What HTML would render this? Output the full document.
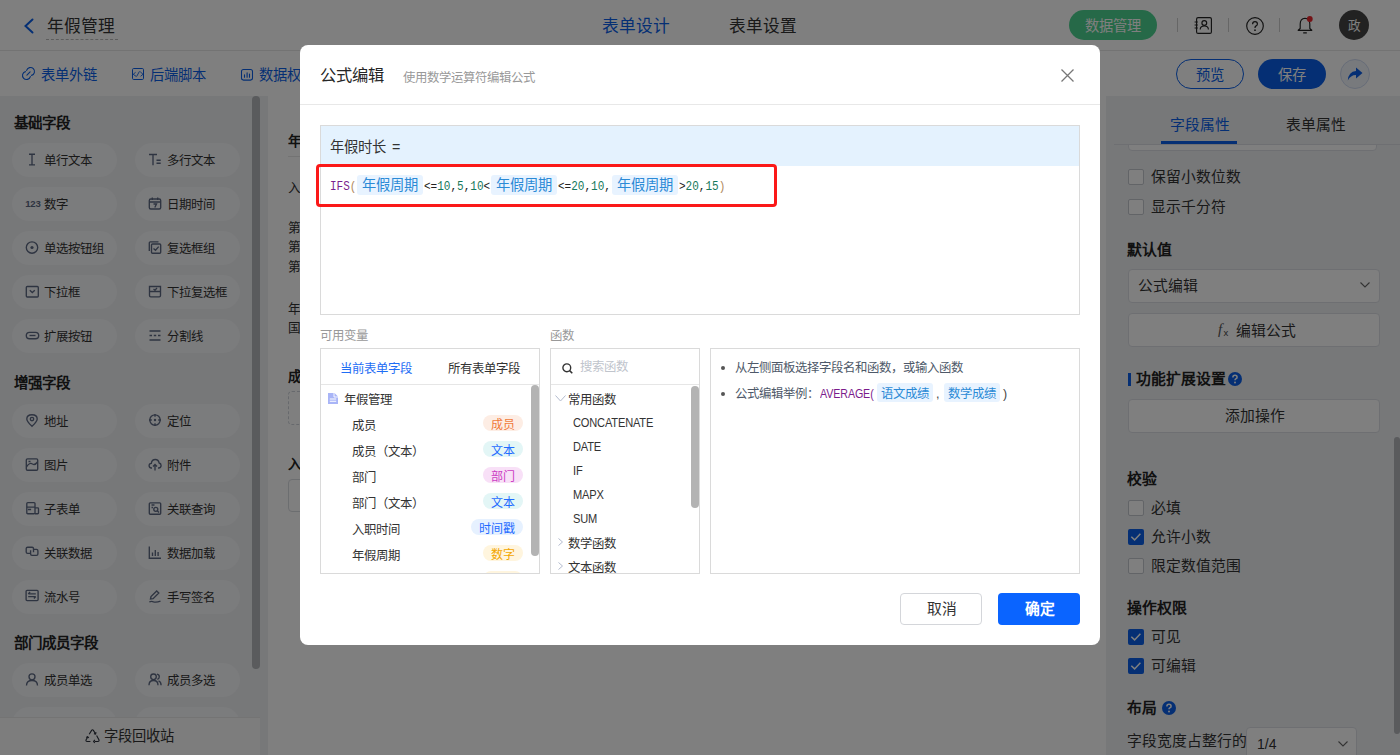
<!DOCTYPE html>
<html lang="zh-CN"><head><meta charset="utf-8"><title>年假管理</title>
<style>
*{box-sizing:border-box;margin:0;padding:0}
html,body{width:1400px;height:755px;overflow:hidden;background:#fff}
body{font-family:"Liberation Sans",sans-serif;color:#333;position:relative}
.a{position:absolute;white-space:nowrap}
svg{display:block;overflow:visible}
/* header */
#hdr{position:absolute;left:0;top:0;width:1400px;height:51px;background:#fff;border-bottom:1px solid #e6e6e6}
#tb{position:absolute;left:0;top:50px;width:1400px;height:46px;background:transparent}
#lp{position:absolute;left:0;top:96px;width:268px;height:659px;background:#eef0f3}
#cv{position:absolute;left:268px;top:96px;width:838px;height:659px;background:#fff}
#rp{position:absolute;left:1106px;top:96px;width:294px;height:659px;background:#eef0f3}
.t16{font-size:16.7px;line-height:20px}
.t14{font-size:14.8px;line-height:20px}
.t12{font-size:12.5px;line-height:16px}
.blue{color:#0a5fe8}
.card{position:absolute;width:105px;height:34px;border-radius:17px;background:#f7f8fa}
.card .ic{position:absolute;left:13px;top:9.5px;width:14px;height:13px}
.card .tx{position:absolute;left:32px;top:9.5px;font-size:12.4px;line-height:16px;color:#333;white-space:nowrap}
.sec{position:absolute;left:14px;font-size:14.5px;line-height:20px;font-weight:bold;color:#222}
#mask{position:absolute;left:0;top:0;width:1400px;height:755px;background:rgba(0,0,0,.5)}
#modal{position:absolute;left:300px;top:45px;width:800px;height:600px;background:#fff;border-radius:8px}
.m16{font-size:16.3px;line-height:20px}
.m14{font-size:14.8px;line-height:20px}
.m12{font-size:12.4px;line-height:16px}
.lat{font-size:12.6px;line-height:16px;letter-spacing:-0.2px;color:#333;transform:scaleX(0.88);transform-origin:0 0}
.fx{font-family:"Liberation Mono",monospace;font-size:12.6px;line-height:20px;color:#333;display:flex;align-items:center}
.fx .g{display:inline-block;height:20px;position:relative;top:1.5px}
.fx .g b{font-weight:normal;display:inline-block;transform:scaleX(0.875);transform-origin:0 50%;white-space:nowrap}
.fx .fn{color:#7a1f8f}.fx .pr{color:#b08a60}.fx .nm{color:#16795c}.fx .op{color:#222}
.fx .vt{font-family:"Liberation Sans",sans-serif;letter-spacing:0;font-size:14.3px;line-height:20px;background:#e8f3ff;color:#2b8ad6;padding:0 5px;margin:0 1px;border-radius:3px}
.ht{background:#e8f3ff;color:#2b8ad6;padding:3px 4px 2px;border-radius:3px;margin-left:4px;display:inline-block;line-height:14px}
.lat2{font-size:12.4px;letter-spacing:-0.1px;transform:scaleX(0.86);transform-origin:0 0}
</style></head><body>

<!-- ============ BACKGROUND PAGE ============ -->
<div id="hdr">
  <svg class="a" style="left:23px;top:18px" width="11" height="16" viewBox="0 0 11 16"><path d="M9.5 1.5 L2.5 8 L9.5 14.5" fill="none" stroke="#0a5fe8" stroke-width="2" stroke-linecap="round"/></svg>
  <div class="a t16" style="left:47px;top:17px;color:#333">年假管理</div>
  <div class="a" style="left:46px;top:39px;width:72px;border-top:1px dashed #bbb"></div>
  <div class="a t16 blue" style="left:602px;top:17px">表单设计</div>
  <div class="a t16" style="left:729px;top:17px;color:#333">表单设置</div>
  <div class="a" style="left:1069px;top:10px;width:88px;height:30px;border-radius:15px;background:#4cd290"></div>
  <div class="a" style="left:1084.5px;top:15.5px;font-size:14.3px;line-height:20px;color:#fff">数据管理</div>
  <div class="a" style="left:1177px;top:18px;width:1px;height:14px;background:#ccc"></div>
  <div class="a" style="left:1228px;top:18px;width:1px;height:14px;background:#ccc"></div>
  <div class="a" style="left:1279px;top:18px;width:1px;height:14px;background:#ccc"></div>
  <!-- contacts icon -->
  <svg class="a" style="left:1194px;top:17px" width="18" height="17" viewBox="0 0 18 17"><rect x="2.6" y="0.6" width="14.8" height="15.8" rx="1.5" fill="none" stroke="#222" stroke-width="1.15"/><circle cx="10.3" cy="6" r="2.4" fill="none" stroke="#222" stroke-width="1.15"/><path d="M6.2 12.5 Q6.2 9 10.3 9 Q14.4 9 14.4 12.5" fill="none" stroke="#222" stroke-width="1.15"/><path d="M0.6 5h3.2M0.6 8h3.2M0.6 11h3.2" stroke="#222" stroke-width="1.1"/></svg>
  <!-- help icon -->
  <svg class="a" style="left:1246px;top:17px" width="18" height="18" viewBox="0 0 18 18"><circle cx="9" cy="9" r="8.3" fill="none" stroke="#222" stroke-width="1.15"/><path d="M6.6 7.2 Q6.6 4.6 9 4.6 Q11.4 4.6 11.4 6.9 Q11.4 8.3 9.8 9.1 Q9 9.5 9 10.9" fill="none" stroke="#222" stroke-width="1.2"/><circle cx="9" cy="13.2" r="0.85" fill="#222"/></svg>
  <!-- bell -->
  <svg class="a" style="left:1297px;top:16px" width="16" height="18" viewBox="0 0 16 18"><path d="M8 2.2 Q3.2 2.4 3.2 8 V12.5 L1.2 14.3 H14.8 L12.8 12.5 V8 Q12.8 2.4 8 2.2 Z M6.2 16.8 H9.8" fill="none" stroke="#222" stroke-width="1.15" stroke-linejoin="round"/><circle cx="12.8" cy="3" r="2.9" fill="#e8262d"/></svg>
  <div class="a" style="left:1339px;top:10px;width:30px;height:30px;border-radius:50%;background:#444"></div>
  <div class="a" style="left:1347.5px;top:17.5px;font-size:12.6px;line-height:16px;color:#fff">政</div>
</div>

<div id="tb">
  <svg class="a" style="left:22.3px;top:17.3px" width="13" height="13" viewBox="0 0 13 13"><path d="M4.64 3.46A4 4 0 1 1 9.54 8.36M8.36 9.54A4 4 0 1 1 3.46 4.64M4.9 8.1L8.1 4.9" fill="none" stroke="#0a5fe8" stroke-width="1.1" stroke-linecap="round"/></svg>
  <div class="a blue" style="left:41px;top:14.5px;font-size:14.3px;line-height:20px">表单外链</div>
  <svg class="a" style="left:132px;top:18px" width="12" height="12" viewBox="0 0 12 12"><rect x="0.5" y="0.5" width="11" height="11" rx="1.2" fill="none" stroke="#0a5fe8" stroke-width="1"/><path d="M3.6 4.3L1.2 6.3L4.3 8.5M7.5 3.3L4.6 8.5M8.2 3.7L11 6.3L8.6 8.3" fill="none" stroke="#0a5fe8" stroke-width="0.9"/></svg>
  <div class="a blue" style="left:150px;top:14.5px;font-size:14.3px;line-height:20px">后端脚本</div>
  <svg class="a" style="left:241px;top:18.5px" width="12" height="12" viewBox="0 0 12 12"><rect x="0.5" y="0.5" width="11" height="10.6" rx="2" fill="none" stroke="#0a5fe8" stroke-width="1.05"/><path d="M3.5 5.9V8.3M6.1 3.9V8.3M8.5 5.1V8.3" stroke="#0a5fe8" stroke-width="1.1" stroke-linecap="round"/></svg>
  <div class="a blue" style="left:259px;top:14.5px;font-size:14.3px;line-height:20px">数据权限</div>
  <div class="a" style="left:1176px;top:9px;width:68px;height:30px;border-radius:15px;border:1px solid #0a5fe8"></div>
  <div class="a blue" style="left:1195.5px;top:14.5px;font-size:14.3px;line-height:20px">预览</div>
  <div class="a" style="left:1258px;top:9px;width:68px;height:30px;border-radius:15px;background:#0a5fe8"></div>
  <div class="a" style="left:1277.5px;top:14.5px;font-size:14.3px;line-height:20px;color:#fff">保存</div>
  <div class="a" style="left:1340px;top:9px;width:30px;height:30px;border-radius:50%;border:1px solid #cfdaf0;background:#f0f4fb"></div>
  <svg class="a" style="left:1347px;top:17px" width="16" height="15" viewBox="0 0 16 15"><path d="M9 0.5 L15.5 6 L9 11.5 V8 Q3.5 8 0.8 13.5 Q1.5 4.5 9 4 Z" fill="#0a5fe8"/></svg>
</div>

<div id="lp"></div>
<div class="a" style="left:0;top:0">
<div class="sec" style="top:113px">基础字段</div>
<div class="card" style="left:12px;top:143px"><svg class="ic" width="13" height="13" viewBox="0 0 13 13"><path d="M3.5 1.2H9.5M3.5 11.8H9.5M6.5 1.2V11.8" stroke="#5d6983" stroke-width="1.35" fill="none"/></svg><div class="tx">单行文本</div></div>
<div class="card" style="left:135px;top:143px"><svg class="ic" width="13" height="13" viewBox="0 0 13 13"><path d="M0.5 1.5H8.5M4.5 1.5V12.2M8 7.2H12.2M8 10.2H12.2" stroke="#5d6983" stroke-width="1.35" fill="none"/></svg><div class="tx">多行文本</div></div>
<div class="card" style="left:12px;top:187px"><svg class="ic" width="13" height="13" viewBox="0 0 13 13"><text x="-0.3" y="10.2" font-family="Liberation Sans" font-weight="bold" font-size="9.6" fill="#5d6983" letter-spacing="-0.2">123</text></svg><div class="tx">数字</div></div>
<div class="card" style="left:135px;top:187px"><svg class="ic" width="13" height="13" viewBox="0 0 13 13"><rect x="0.8" y="2" width="11.4" height="10" rx="1.5" stroke="#5d6983" stroke-width="1.35" fill="none"/><path d="M0.8 5H12.2M3.8 0.5V3M9.2 0.5V3M5 7H8L6.3 10.5" stroke="#5d6983" stroke-width="1.35" fill="none"/></svg><div class="tx">日期时间</div></div>
<div class="card" style="left:12px;top:231px"><svg class="ic" width="13" height="13" viewBox="0 0 13 13"><circle cx="6.5" cy="6.5" r="5.7" stroke="#5d6983" stroke-width="1.35" fill="none"/><circle cx="6.5" cy="6.5" r="1.6" fill="#5d6983"/></svg><div class="tx">单选按钮组</div></div>
<div class="card" style="left:135px;top:231px"><svg class="ic" width="13" height="13" viewBox="0 0 13 13"><path d="M0.8 10V1.8Q0.8 0.8 1.8 0.8H10" stroke="#5d6983" stroke-width="1.35" fill="none"/><rect x="3" y="3" width="9.2" height="9.2" rx="1" stroke="#5d6983" stroke-width="1.35" fill="none"/><path d="M5 7.4L7 9.2L10.2 5.6" stroke="#5d6983" stroke-width="1.35" fill="none"/></svg><div class="tx">复选框组</div></div>
<div class="card" style="left:12px;top:275px"><svg class="ic" width="13" height="13" viewBox="0 0 13 13"><rect x="0.8" y="1.5" width="12" height="10.5" rx="1" stroke="#5d6983" stroke-width="1.35" fill="none"/><path d="M4.3 5.3L6.8 7.6L9.3 5.3" stroke="#5d6983" stroke-width="1.35" fill="none"/></svg><div class="tx">下拉框</div></div>
<div class="card" style="left:135px;top:275px"><svg class="ic" width="13" height="13" viewBox="0 0 13 13"><path d="M1 1.5H12V6.5H1Z M1 6.5V10.5Q1 11.8 2.3 11.8H10.7Q12 11.8 12 10.5V6.5 M5 4L6.5 5.2L8.5 3" stroke="#5d6983" stroke-width="1.35" fill="none"/></svg><div class="tx">下拉复选框</div></div>
<div class="card" style="left:12px;top:319px"><svg class="ic" width="13" height="13" viewBox="0 0 13 13"><rect x="0.8" y="3.3" width="12.4" height="6.4" rx="3.2" stroke="#5d6983" stroke-width="1.35" fill="none"/><path d="M4 6.5H10" stroke="#5d6983" stroke-width="1.35" fill="none"/></svg><div class="tx">扩展按钮</div></div>
<div class="card" style="left:135px;top:319px"><svg class="ic" width="13" height="13" viewBox="0 0 13 13"><path d="M1 2H12M1 6.5H3.5M5.3 6.5H7.7M9.5 6.5H12M1 11H12" stroke="#5d6983" stroke-width="1.35" fill="none"/></svg><div class="tx">分割线</div></div>
<div class="sec" style="top:373px">增强字段</div>
<div class="card" style="left:12px;top:404px"><svg class="ic" width="13" height="13" viewBox="0 0 13 13"><path d="M6.5 12.3Q1.3 7.5 1.3 5Q1.3 0.7 6.5 0.7Q11.7 0.7 11.7 5Q11.7 7.5 6.5 12.3Z" stroke="#5d6983" stroke-width="1.35" fill="none"/><circle cx="6.5" cy="5" r="1.7" stroke="#5d6983" stroke-width="1.35" fill="none"/></svg><div class="tx">地址</div></div>
<div class="card" style="left:135px;top:404px"><svg class="ic" width="13" height="13" viewBox="0 0 13 13"><circle cx="6.5" cy="6" r="5.2" stroke="#5d6983" stroke-width="1.35" fill="none"/><circle cx="6.5" cy="6" r="1.2" fill="#5d6983"/><path d="M6.5 0V2.8M6.5 9.2V12M0.5 6H3.3M9.7 6H12.5" stroke="#5d6983" stroke-width="1.35" fill="none"/></svg><div class="tx">定位</div></div>
<div class="card" style="left:12px;top:448px"><svg class="ic" width="13" height="13" viewBox="0 0 13 13"><rect x="0.8" y="0.8" width="11.4" height="11.4" rx="1.2" stroke="#5d6983" stroke-width="1.35" fill="none"/><path d="M1 9Q4 4 7 6Q9.5 7.5 12 4M3 3.5H5" stroke="#5d6983" stroke-width="1.35" fill="none"/></svg><div class="tx">图片</div></div>
<div class="card" style="left:135px;top:448px"><svg class="ic" width="13" height="13" viewBox="0 0 13 13"><path d="M3.5 10H2.8Q0.6 10 0.6 7.6Q0.6 5.5 2.8 5.3Q3.4 1.5 6.8 1.5Q10 1.5 10.6 5Q12.6 5.4 12.6 7.6Q12.6 10 10.2 10H9.5M6.5 12.5V6.5M4.5 8.5L6.5 6.5L8.5 8.5" stroke="#5d6983" stroke-width="1.35" fill="none"/></svg><div class="tx">附件</div></div>
<div class="card" style="left:12px;top:492px"><svg class="ic" width="13" height="13" viewBox="0 0 13 13"><rect x="1.3" y="0.6" width="8.2" height="11.1" rx="1" stroke="#5d6983" stroke-width="1.35" fill="none"/><path d="M1.3 5.1H9.5M2.4 7.5H5.6M9.5 5.9H12.2Q13 5.9 13 6.7V10.9Q13 11.7 12.2 11.7H9.5" stroke="#5d6983" stroke-width="1.35" fill="none"/></svg><div class="tx">子表单</div></div>
<div class="card" style="left:135px;top:492px"><svg class="ic" width="13" height="13" viewBox="0 0 13 13"><rect x="0.8" y="0.8" width="11.4" height="11.4" rx="1" stroke="#5d6983" stroke-width="1.35" fill="none"/><path d="M3 3H6M3 5.5H4.5" stroke="#5d6983" stroke-width="1.35" fill="none"/><circle cx="7.3" cy="7.3" r="2" stroke="#5d6983" stroke-width="1.35" fill="none"/><path d="M8.8 8.8L10.5 10.5" stroke="#5d6983" stroke-width="1.35" fill="none"/></svg><div class="tx">关联查询</div></div>
<div class="card" style="left:12px;top:536px"><svg class="ic" width="13" height="13" viewBox="0 0 13 13"><path d="M4.6 7.4H2.1Q0.7 7.4 0.7 6V2.6Q0.7 1.2 2.1 1.2H6.6Q8 1.2 8 2.6V6.3M8.4 3.3H11Q12.4 3.3 12.4 4.7V7.9Q12.4 9.3 11 9.3H6.5Q5.1 9.3 5.1 7.9V4.3" stroke="#5d6983" stroke-width="1.35" fill="none"/></svg><div class="tx">关联数据</div></div>
<div class="card" style="left:135px;top:536px"><svg class="ic" width="13" height="13" viewBox="0 0 13 13"><path d="M0.8 0.5V12.2H12.5M4 6.5V10M6.8 4V10M9.6 6V10" stroke="#5d6983" stroke-width="1.35" fill="none"/></svg><div class="tx">数据加载</div></div>
<div class="card" style="left:12px;top:580px"><svg class="ic" width="13" height="13" viewBox="0 0 13 13"><rect x="0.6" y="0.3" width="12" height="10.3" rx="1" stroke="#5d6983" stroke-width="1.35" fill="none"/><path d="M2.7 3.9H10.3M2.7 3.9L4.6 2.1M2.7 6.6H10.3M10.3 6.6L8.4 8.4" stroke="#5d6983" stroke-width="1.35" fill="none"/></svg><div class="tx">流水号</div></div>
<div class="card" style="left:135px;top:580px"><svg class="ic" width="13" height="13" viewBox="0 0 13 13"><path d="M2 9L2.5 6.6L8.2 0.9L10.3 3L4.6 8.7Z M0.8 12Q3 10.8 5 11.8Q7.5 12.8 12 11.2" stroke="#5d6983" stroke-width="1.35" fill="none"/></svg><div class="tx">手写签名</div></div>
<div class="sec" style="top:633px">部门成员字段</div>
<div class="card" style="left:12px;top:663px"><svg class="ic" width="13" height="13" viewBox="0 0 13 13"><circle cx="6.5" cy="3.8" r="3" stroke="#5d6983" stroke-width="1.35" fill="none"/><path d="M1 12.5Q1 7.5 6.5 7.5Q12 7.5 12 12.5" stroke="#5d6983" stroke-width="1.35" fill="none"/></svg><div class="tx">成员单选</div></div>
<div class="card" style="left:135px;top:663px"><svg class="ic" width="13" height="13" viewBox="0 0 13 13"><circle cx="5" cy="3.8" r="2.8" stroke="#5d6983" stroke-width="1.35" fill="none"/><path d="M0.5 12.3Q0.5 7.5 5 7.5Q9.5 7.5 9.5 12.3M8.5 1.2Q10.8 1.6 10.8 3.8Q10.8 5.8 8.8 6.3M10 7.8Q12.6 8.6 12.6 12.3" stroke="#5d6983" stroke-width="1.35" fill="none"/></svg><div class="tx">成员多选</div></div>
<div class="card" style="left:12px;top:707px"><svg class="ic" width="13" height="13" viewBox="0 0 13 13"></svg><div class="tx">部门单选</div></div>
<div class="card" style="left:135px;top:707px"><svg class="ic" width="13" height="13" viewBox="0 0 13 13"></svg><div class="tx">部门多选</div></div>
</div>
<div class="a" style="left:252px;top:96px;width:8px;height:573px;border-radius:4px;background:#b4b6ba"></div>
<div class="a" style="left:0;top:717px;width:260px;height:38px;background:#fafafa;border-top:1px solid #e8e8e8"></div>
<svg class="a" style="left:84.5px;top:728.5px" width="15" height="14" viewBox="0 0 15 14"><path d="M4.2 5.2L6.6 1.4Q7.5 0.2 8.4 1.4L10.2 4.3M11.6 6.6L13.9 10.8Q14.5 12.5 12.8 12.5H9.6M5.4 12.5H2.2Q0.5 12.5 1.1 10.8L2.6 8.2" fill="none" stroke="#2a2f3a" stroke-width="1.1" stroke-linejoin="round"/><path d="M8.9 4.6L10.6 5L11 3.2M9.8 10.9L8.6 12.5L9.8 14M1.2 8.5L2.7 7.6L3.8 9" fill="none" stroke="#2a2f3a" stroke-width="1.1"/></svg>
<div class="a" style="left:104px;top:726px;color:#333;font-size:14.3px;line-height:20px">字段回收站</div>
<div id="cv"></div>
<div class="a" style="left:288px;top:133.5px;font-size:13.5px;line-height:16px;font-weight:bold;color:#222">年假时长设置</div>
<div class="a" style="left:288px;top:156px;width:780px;height:1px;background:#e6e6e6"></div>
<div class="a" style="left:288px;top:179.5px;font-size:12.6px;line-height:16px;color:#333">入职满一年后可享受年假</div>
<div class="a" style="left:288px;top:218.5px;font-size:12.6px;line-height:19.5px;color:#333">第一档<br>第二档<br>第三档</div>
<div class="a" style="left:288px;top:300px;font-size:12.6px;line-height:19px;color:#333">年假周期<br>国家规定</div>
<div class="a" style="left:288px;top:369px;font-size:13.5px;line-height:16px;font-weight:bold;color:#222">成员</div>
<div class="a" style="left:288px;top:391px;width:780px;height:34px;border:1px dashed #cfd3da;border-radius:4px"></div>
<div class="a" style="left:288px;top:457px;font-size:13.5px;line-height:16px;font-weight:bold;color:#222">入职时间</div>
<div class="a" style="left:288px;top:479px;width:780px;height:33px;border:1px solid #d9dce1;border-radius:4px"></div>
<div id="rp"></div>
<div class="a" style="left:1128px;top:115px;width:249px;height:36px;border:1px solid #dcdfe5;border-radius:4px;background:#fff"></div>
<div class="a" style="left:1106px;top:96px;width:294px;height:49px;background:#eef0f3"></div>
<div class="a t14" style="left:1170px;top:115px;color:#0a5fe8">字段属性</div>
<div class="a t14" style="left:1286px;top:115px;color:#333">表单属性</div>
<div class="a" style="left:1114px;top:144px;width:286px;height:1px;background:#dcdfe5"></div>
<div class="a" style="left:1161px;top:141px;width:76px;height:3px;background:#0a5fe8"></div>
<div class="a" style="left:1128px;top:169px;width:16px;height:16px;border-radius:2px;border:1px solid #c4c8cf;background:#fff"></div><div class="a t14" style="left:1151px;top:167px;color:#333;">保留小数位数</div><div class="a" style="left:1128px;top:199px;width:16px;height:16px;border-radius:2px;border:1px solid #c4c8cf;background:#fff"></div><div class="a t14" style="left:1151px;top:197px;color:#333;">显示千分符</div>
<div class="a t14" style="left:1127px;top:240px;font-weight:600;color:#222">默认值</div>
<div class="a" style="left:1128px;top:269px;width:252px;height:34px;border:1px solid #dcdfe5;border-radius:4px;background:#fff"></div>
<div class="a t14" style="left:1138px;top:276px;color:#333;">公式编辑</div>
<svg class="a" style="left:1360px;top:282px" width="10" height="6" viewBox="0 0 10 6"><path d="M0.5 0.5L5 5L9.5 0.5" fill="none" stroke="#666" stroke-width="1.1"/></svg>
<div class="a" style="left:1128px;top:313px;width:252px;height:34px;border:1px solid #dcdfe5;border-radius:4px;background:#fff"></div>
<div class="a" style="left:1218px;top:319px;font-family:'Liberation Serif',serif;font-style:italic;font-size:15px;line-height:20px;color:#555">f</div>
<div class="a" style="left:1223.5px;top:327px;font-family:'Liberation Sans',sans-serif;font-size:9.5px;line-height:12px;color:#444">x</div>
<div class="a t14" style="left:1235.5px;top:321px;color:#333;">编辑公式</div>
<div class="a" style="left:1128px;top:373px;width:3px;height:13px;background:#0a5fe8"></div>
<div class="a t14" style="left:1136px;top:369px;font-weight:600;color:#222">功能扩展设置</div>
<svg class="a" style="left:1228px;top:372px" width="14" height="14" viewBox="0 0 14 14"><circle cx="7" cy="7" r="7" fill="#0a5fe8"/><path d="M4.9 5.4Q4.9 3.3 7 3.3Q9.1 3.3 9.1 5.2Q9.1 6.3 7.8 6.9Q7 7.3 7 8.3" fill="none" stroke="#fff" stroke-width="1.5"/><circle cx="7" cy="10.5" r="0.95" fill="#fff"/></svg>
<div class="a" style="left:1128px;top:399px;width:252px;height:34px;border:1px solid #dcdfe5;border-radius:4px;background:#fff"></div>
<div class="a t14" style="left:1225px;top:406px;color:#333;">添加操作</div>
<div class="a t14" style="left:1127px;top:469px;font-weight:600;color:#222">校验</div>
<div class="a" style="left:1128px;top:500px;width:16px;height:16px;border-radius:2px;border:1px solid #c4c8cf;background:#fff"></div><div class="a t14" style="left:1151px;top:498px;color:#333;">必填</div><div class="a" style="left:1128px;top:529px;width:16px;height:16px;border-radius:2px;background:#0a5fe8"></div><svg class="a" style="left:1128px;top:529px" width="16" height="16" viewBox="0 0 16 16"><path d="M3.3 7.8L6.6 10.9L12.4 4.8" fill="none" stroke="#fff" stroke-width="1.5"/></svg><div class="a t14" style="left:1151px;top:527px;color:#333;">允许小数</div><div class="a" style="left:1128px;top:558px;width:16px;height:16px;border-radius:2px;border:1px solid #c4c8cf;background:#fff"></div><div class="a t14" style="left:1151px;top:556px;color:#333;">限定数值范围</div>
<div class="a t14" style="left:1127px;top:598px;font-weight:600;color:#222">操作权限</div>
<div class="a" style="left:1128px;top:629px;width:16px;height:16px;border-radius:2px;background:#0a5fe8"></div><svg class="a" style="left:1128px;top:629px" width="16" height="16" viewBox="0 0 16 16"><path d="M3.3 7.8L6.6 10.9L12.4 4.8" fill="none" stroke="#fff" stroke-width="1.5"/></svg><div class="a t14" style="left:1151px;top:627px;color:#333;">可见</div><div class="a" style="left:1128px;top:658px;width:16px;height:16px;border-radius:2px;background:#0a5fe8"></div><svg class="a" style="left:1128px;top:658px" width="16" height="16" viewBox="0 0 16 16"><path d="M3.3 7.8L6.6 10.9L12.4 4.8" fill="none" stroke="#fff" stroke-width="1.5"/></svg><div class="a t14" style="left:1151px;top:656px;color:#333;">可编辑</div>
<div class="a t14" style="left:1127px;top:698px;font-weight:600;color:#222">布局</div>
<svg class="a" style="left:1162px;top:701px" width="14" height="14" viewBox="0 0 14 14"><circle cx="7" cy="7" r="7" fill="#0a5fe8"/><path d="M4.9 5.4Q4.9 3.3 7 3.3Q9.1 3.3 9.1 5.2Q9.1 6.3 7.8 6.9Q7 7.3 7 8.3" fill="none" stroke="#fff" stroke-width="1.5"/><circle cx="7" cy="10.5" r="0.95" fill="#fff"/></svg><div class="a t14" style="left:1127px;top:731px;color:#333;">字段宽度占整行的</div>
<div class="a" style="left:1246px;top:727px;width:111px;height:34px;border:1px solid #dcdfe5;border-radius:4px;background:#fff"></div>
<div class="a" style="left:1257px;top:734px;font-size:14px;line-height:20px;color:#333">1/4</div>
<svg class="a" style="left:1338px;top:741px" width="10" height="6" viewBox="0 0 10 6"><path d="M0.5 0.5L5 5L9.5 0.5" fill="none" stroke="#666" stroke-width="1.1"/></svg>
<div class="a" style="left:1394px;top:437px;width:6px;height:297px;border-radius:3px;background:#b4b6ba"></div>

<div id="mask"></div>

<!-- ============ MODAL ============ -->
<div id="modal">
<div class="a m16" style="left:20px;top:20px;color:#262626">公式编辑</div>
<div class="a m12" style="left:103px;top:24.5px;color:#999">使用数学运算符编辑公式</div>
<svg class="a" style="left:761px;top:24px" width="13" height="13" viewBox="0 0 13 13"><path d="M0.5 0.5L12.5 12.5M12.5 0.5L0.5 12.5" stroke="#777" stroke-width="1.3"/></svg>
<div class="a" style="left:0;top:59px;width:800px;height:1px;background:#e8e8e8"></div>
<div class="a" style="left:20px;top:80px;width:760px;height:190px;border:1px solid #dadada"></div>
<div class="a" style="left:21px;top:81px;width:758px;height:40px;background:#e4f2fe"></div>
<div class="a" style="left:30px;top:91.5px;color:#333;font-size:14.3px;line-height:20px">年假时长 <span style="margin-left:2px">=</span></div>
<div class="a" style="left:16px;top:119px;width:461px;height:43px;border:3px solid #fb1818;border-radius:4px"></div>
<div class="a fx" style="left:30px;top:130px"><span class="g" style="width:26.4px"><b><span class="fn">IFS</span><span class="pr">(</span></b></span><span class="vt">年假周期</span><span class="g" style="width:66.0px"><b><span class="op">&lt;=</span><span class="nm">10</span><span class="op">,</span><span class="nm">5</span><span class="op">,</span><span class="nm">10</span><span class="op">&lt;</span></b></span><span class="vt">年假周期</span><span class="g" style="width:52.8px"><b><span class="op">&lt;=</span><span class="nm">20</span><span class="op">,</span><span class="nm">10</span><span class="op">,</span></b></span><span class="vt">年假周期</span><span class="g" style="width:46.2px"><b><span class="op">&gt;</span><span class="nm">20</span><span class="op">,</span><span class="nm">15</span><span class="pr">)</span></b></span></div>
<div class="a m12" style="left:20px;top:283px;color:#999">可用变量</div>
<div class="a m12" style="left:250px;top:283px;color:#999">函数</div>
<!-- variables panel -->
<div class="a" style="left:20px;top:303px;width:220px;height:226px;border:1px solid #dadada"></div>
<div class="a m12" style="left:40px;top:316px;color:#1f6ef5">当前表单字段</div>
<div class="a m12" style="left:148px;top:316px;color:#333">所有表单字段</div>
<div class="a" style="left:21px;top:339px;width:218px;height:1px;background:#e6e6e6"></div>
<div class="a" style="left:231px;top:340px;width:8px;height:171px;border-radius:4px;background:#b3b3b3"></div>
<svg class="a" style="left:28px;top:347.5px" width="10" height="11" viewBox="0 0 10 11"><path d="M0 0H6.5L10 3.5V11H0Z" fill="#a9b5f7"/><path d="M1.8 6H8.2M1.8 8.3H8.2" stroke="#fff" stroke-width="1.1"/><path d="M6 0V4H10" fill="none" stroke="#fff" stroke-width="0.9"/></svg>
<div class="a m12" style="left:44px;top:347px;color:#333">年假管理</div>
<div class="a" style="left:0;top:0;width:239px;height:528px;overflow:hidden"><div class="a m12" style="left:52px;top:373px">成员</div><div class="a" style="left:183px;top:370px;width:40px;height:16px;border-radius:8px;background:#fdede4;color:#f07a3a;font-size:12px;line-height:21.5px;text-align:center;overflow:hidden">成员</div><div class="a m12" style="left:52px;top:399px">成员（文本）</div><div class="a" style="left:183px;top:396px;width:40px;height:16px;border-radius:8px;background:#e3f6f6;color:#1f6bff;font-size:12px;line-height:21.5px;text-align:center;overflow:hidden">文本</div><div class="a m12" style="left:52px;top:425px">部门</div><div class="a" style="left:183px;top:422px;width:40px;height:16px;border-radius:8px;background:#f8e0f7;color:#cc3dc4;font-size:12px;line-height:21.5px;text-align:center;overflow:hidden">部门</div><div class="a m12" style="left:52px;top:451px">部门（文本）</div><div class="a" style="left:183px;top:448px;width:40px;height:16px;border-radius:8px;background:#e3f6f6;color:#1f6bff;font-size:12px;line-height:21.5px;text-align:center;overflow:hidden">文本</div><div class="a m12" style="left:52px;top:477px">入职时间</div><div class="a" style="left:171px;top:474px;width:52px;height:16px;border-radius:8px;background:#e6f1ff;color:#1f6bff;font-size:12px;line-height:21.5px;text-align:center;overflow:hidden">时间戳</div><div class="a m12" style="left:52px;top:503px">年假周期</div><div class="a" style="left:183px;top:500px;width:40px;height:16px;border-radius:8px;background:#fff5de;color:#f2a600;font-size:12px;line-height:21.5px;text-align:center;overflow:hidden">数字</div><div class="a" style="left:183px;top:526px;width:40px;height:16px;border-radius:8px;background:#fff5de;color:#f2a600;font-size:12px;line-height:21.5px;text-align:center;overflow:hidden">数字</div></div>
<!-- functions panel -->
<div class="a" style="left:250px;top:303px;width:150px;height:226px;border:1px solid #dadada"></div>
<svg class="a" style="left:262px;top:318px" width="11" height="11" viewBox="0 0 11 11"><circle cx="4.8" cy="4.8" r="3.9" fill="none" stroke="#333" stroke-width="1.4"/><path d="M7.6 7.6L10.3 10.3" stroke="#333" stroke-width="1.5"/></svg>
<div class="a m12" style="left:280px;top:314px;color:#c0c4cc">搜索函数</div>
<div class="a" style="left:251px;top:339px;width:148px;height:1px;background:#e6e6e6"></div>
<div class="a" style="left:391px;top:341px;width:8px;height:122px;border-radius:4px;background:#b3b3b3"></div>
<svg class="a" style="left:255px;top:350px" width="11" height="7" viewBox="0 0 11 7"><path d="M0.5 0.5L5.5 6L10.5 0.5" fill="none" stroke="#b4bccf" stroke-width="1"/></svg>
<div class="a m12" style="left:268px;top:347px;color:#333">常用函数</div>
<div class="a" style="left:0;top:0;width:399px;height:528px;overflow:hidden"><div class="a lat" style="left:273px;top:370px">CONCATENATE</div><div class="a lat" style="left:273px;top:394px">DATE</div><div class="a lat" style="left:273px;top:418px">IF</div><div class="a lat" style="left:273px;top:442px">MAPX</div><div class="a lat" style="left:273px;top:466px">SUM</div>
<svg class="a" style="left:258px;top:493px" width="5" height="8" viewBox="0 0 5 8"><path d="M0.5 0.5L4.5 4L0.5 7.5" fill="none" stroke="#b4bccf" stroke-width="1"/></svg>
<div class="a m12" style="left:268px;top:491px;color:#333">数学函数</div>
<svg class="a" style="left:258px;top:517px" width="5" height="8" viewBox="0 0 5 8"><path d="M0.5 0.5L4.5 4L0.5 7.5" fill="none" stroke="#b4bccf" stroke-width="1"/></svg>
<div class="a m12" style="left:268px;top:515px;color:#333">文本函数</div>
</div>
<!-- help panel -->
<div class="a" style="left:410px;top:303px;width:370px;height:226px;border:1px solid #dadada"></div>
<div class="a" style="left:421px;top:321px;width:4px;height:4px;border-radius:50%;background:#555"></div>
<div class="a m12" style="left:435px;top:315px;color:#4e5969">从左侧面板选择字段名和函数，或输入函数</div>
<div class="a" style="left:421px;top:347px;width:4px;height:4px;border-radius:50%;background:#555"></div>
<div class="a m12" style="left:435px;top:341px;color:#4e5969">公式编辑举例：</div>
<div class="a lat2" style="left:520px;top:341px;line-height:16px;color:#7b1a8c">AVERAGE(</div>
<div class="a" style="left:577px;top:338px;width:56px;height:19px;border-radius:3px;background:#e8f3ff"></div>
<div class="a m12" style="left:581px;top:341px;color:#2b8ad6">语文成绩</div>
<div class="a m12" style="left:636px;top:341px;color:#444">,</div>
<div class="a" style="left:644px;top:338px;width:56px;height:19px;border-radius:3px;background:#e8f3ff"></div>
<div class="a m12" style="left:648px;top:341px;color:#2b8ad6">数学成绩</div>
<div class="a m12" style="left:703px;top:341px;color:#444">)</div>
<!-- buttons -->
<div class="a" style="left:600px;top:548px;width:82px;height:32px;border:1px solid #d4d6da;border-radius:4px;background:#fff"></div>
<div class="a m14" style="left:627px;top:554px;color:#333">取消</div>
<div class="a" style="left:698px;top:548px;width:82px;height:32px;border-radius:4px;background:#0a64ff"></div>
<div class="a m14" style="left:725px;top:554px;color:#fff;font-weight:bold">确定</div>
</div>

</body></html>
